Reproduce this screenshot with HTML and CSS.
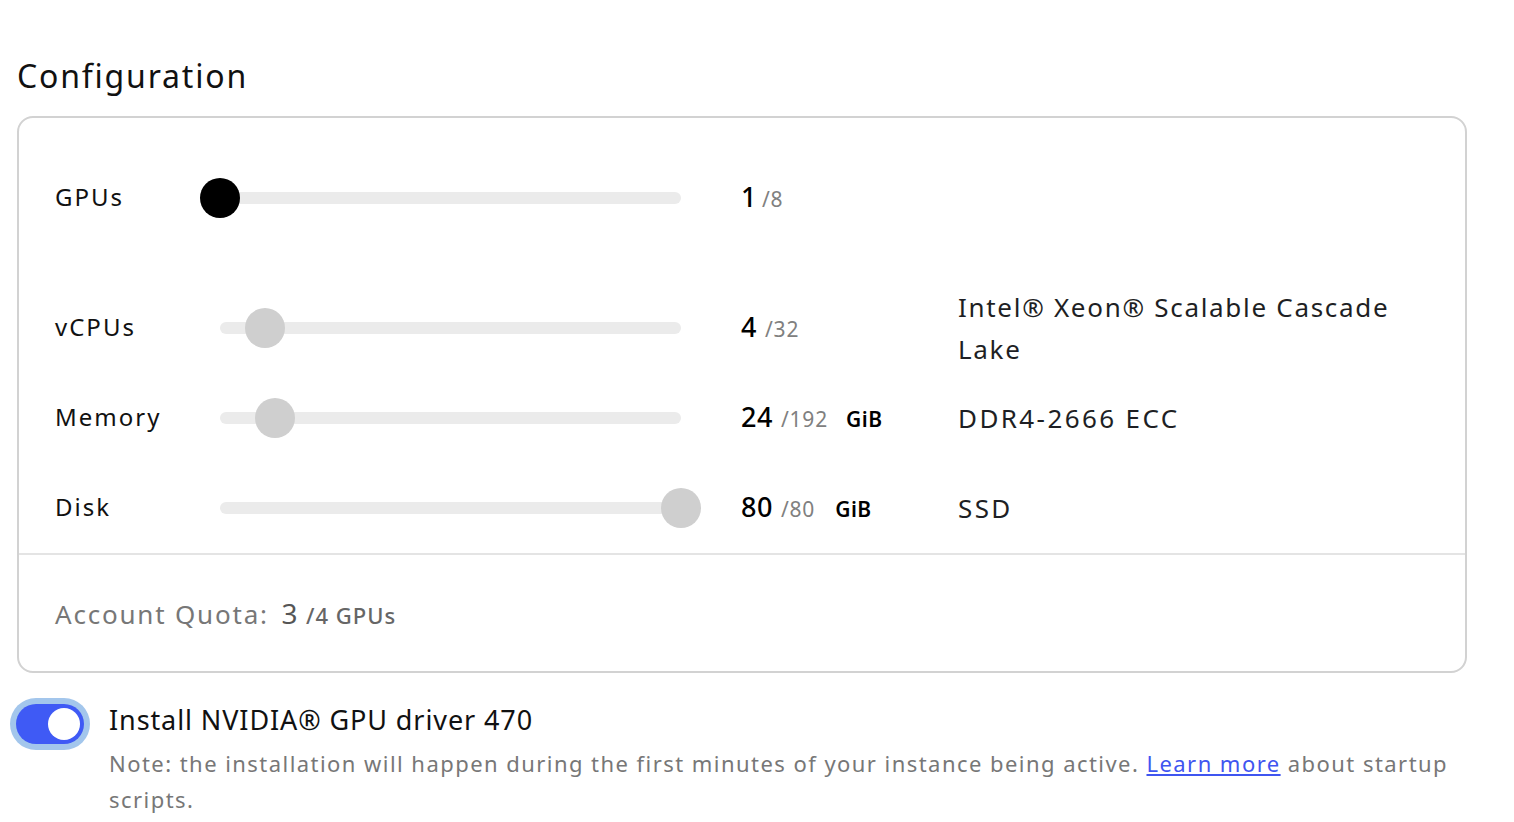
FILE: index.html
```html
<!DOCTYPE html>
<html>
<head>
<meta charset="utf-8">
<link rel="stylesheet" href="styles.css">
</head>
<body>
<div class="page">
  <h2 class="title">Configuration</h2>
  <div class="card">
    <div class="rows">
      <div class="row row-gpu">
        <div class="label">GPUs</div>
        <div class="slider"><div class="track"></div><div class="thumb thumb-dark" style="left:0%"></div></div>
        <div class="value"><span class="num num-tight">1</span><span class="max">/8</span></div>
        <div class="spec"></div>
      </div>
      <div class="row">
        <div class="label">vCPUs</div>
        <div class="slider"><div class="track"></div><div class="thumb" style="left:9.7%"></div></div>
        <div class="value"><span class="num">4</span><span class="max">/32</span></div>
        <div class="spec spec-cpu">Intel® Xeon® Scalable Cascade Lake</div>
      </div>
      <div class="row">
        <div class="label">Memory</div>
        <div class="slider"><div class="track"></div><div class="thumb" style="left:12%"></div></div>
        <div class="value"><span class="num">24</span><span class="max">/192</span><span class="unit">GiB</span></div>
        <div class="spec">DDR4-2666 ECC</div>
      </div>
      <div class="row">
        <div class="label">Disk</div>
        <div class="slider"><div class="track"></div><div class="thumb" style="left:100%"></div></div>
        <div class="value"><span class="num">80</span><span class="max">/80</span><span class="unit unit-disk">GiB</span></div>
        <div class="spec">SSD</div>
      </div>
    </div>
    <div class="footer">
      <span class="quota">Account Quota: <span class="q-num">3</span> <span class="q-max">/4 GPUs</span></span>
    </div>
  </div>
  <div class="driver">
    <div class="toggle"><div class="knob"></div></div>
    <div class="driver-text">
      <div class="driver-title">Install NVIDIA® GPU driver 470</div>
      <p class="note">Note: the installation will happen during the first minutes of your instance being active. <a href="#" class="link">Learn more</a> about startup scripts.</p>
    </div>
  </div>
</div>
</body>
</html>
```

FILE: styles.css
```css
* { box-sizing: border-box; }
html, body { margin: 0; padding: 0; background: #fff; }
body { font-family: "Noto Sans", "Open Sans", sans-serif; color: #111; }
.page { padding: 54px 47px 0 17px; }
.title {
  margin: 0 0 18px 0;
  font-size: 32px;
  font-weight: 400;
  line-height: 44px;
  color: #111;
  letter-spacing: 1.8px;
}
.card {
  border: 2px solid #d2d2d2;
  border-radius: 16px;
  width: 1450px;
}
.rows { padding: 35px 36px 0 36px; }
.row {
  display: grid;
  grid-template-columns: 165px 461px 277px 1fr;
  align-items: center;
  height: 90px;
}
.row-gpu { margin-bottom: 40px; }
.label { font-size: 24px; letter-spacing: 2px; color: #111; padding-bottom: 4px; }
.slider { position: relative; height: 40px; display: flex; align-items: center; width: 461px; }
.value { padding-left: 60px; white-space: nowrap; display: flex; align-items: baseline; padding-bottom: 3px; }
.track { width: 100%; height: 12px; border-radius: 6px; background: #ebebeb; }
.thumb {
  position: absolute;
  top: 0;
  width: 40px;
  height: 40px;
  margin-left: -20px;
  border-radius: 50%;
  background: #cfcfcf;
}
.thumb-dark { background: #000; }
.num { font-size: 27px; font-weight: 500; color: #000; margin-right: 8px; letter-spacing: 0.5px; }
.num-tight { margin-right: 5px; }
.max { font-size: 21px; color: #808080; letter-spacing: 0.8px; }
.unit { font-size: 21px; font-weight: 600; color: #000; margin-left: 18px; letter-spacing: 0.5px; }
.unit-disk { margin-left: 20px; }
.spec { font-size: 26px; letter-spacing: 2.4px; color: #1e1f24; line-height: 42px; }
.spec-cpu { letter-spacing: 1.7px; }
.footer {
  border-top: 2px solid #e4e4e4;
  height: 118px;
  padding-left: 36px;
  display: flex;
  align-items: center;
}
.quota { font-size: 26px; color: #777; letter-spacing: 1.8px; white-space: nowrap; }
.quota .q-num { font-size: 28px; color: #555; margin-left: 4px; letter-spacing: 0; }
.quota .q-max { font-size: 22px; font-weight: 500; color: #666; letter-spacing: 1px; }
.driver { display: flex; margin-top: 28px; }
.toggle {
  flex: none;
  width: 68px;
  height: 40px;
  margin: 3px 18px 0 -1px;
  border-radius: 20px;
  background: #3f5af5;
  box-shadow: 0 0 0 6px #a3c6ec;
  position: relative;
}
.knob {
  position: absolute;
  right: 4px;
  top: 4px;
  width: 32px;
  height: 32px;
  border-radius: 50%;
  background: #fff;
}
.driver-text { padding-left: 7px; }
.driver-title { font-size: 27px; line-height: 38px; letter-spacing: 0.9px; color: #111; }
.note { font-size: 22px; line-height: 36px; color: #777; letter-spacing: 1.45px; margin: 6px 0 0 0; }
.link { color: #3f55f0; text-decoration: underline; }
```
